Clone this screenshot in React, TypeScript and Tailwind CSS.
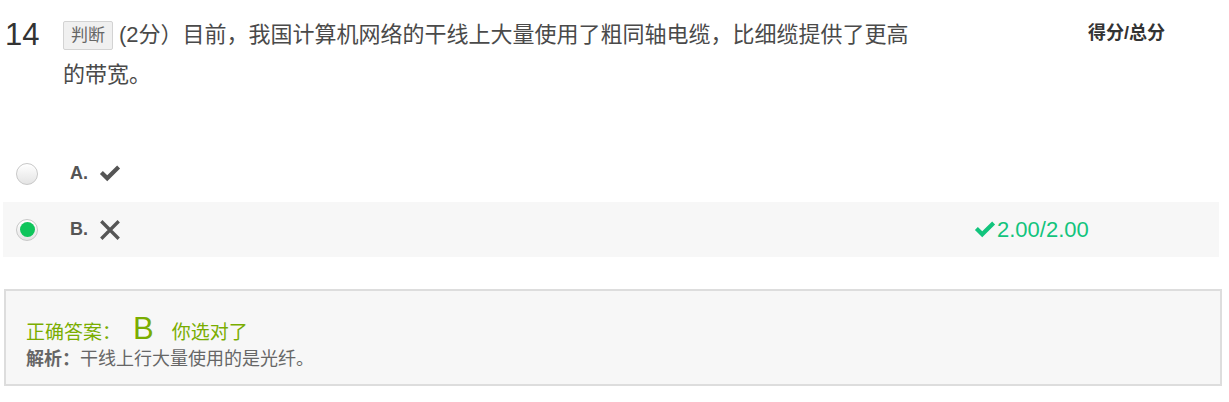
const font = '[font-family:"Liberation_Sans","Noto_Sans_CJK_SC",sans-serif]'

function Check({ className }: { className?: string }) {
  return (
    <svg viewBox="0 0 24 18" className={className} fill="currentColor">
      <path d="M1 9.5 L4.2 6.3 L9 11 L19.8 0.3 L23 3.5 L9 17.5 Z" />
    </svg>
  )
}

function Cross({ className }: { className?: string }) {
  return (
    <svg viewBox="0 0 24 24" className={className} stroke="currentColor" strokeWidth="3.6" fill="none">
      <path d="M2.5 2.5 L21.5 21.5 M21.5 2.5 L2.5 21.5" />
    </svg>
  )
}

function Radio({ checked }: { checked?: boolean }) {
  return (
    <div className="w-[22px] h-[22px] rounded-full border border-[#c8c8c8] bg-gradient-to-b from-white to-[#e4e4e4] flex items-center justify-center shadow-[inset_0_1px_1px_rgba(255,255,255,0.8)]">
      {checked && <div className="w-[15px] h-[15px] rounded-full bg-[#0fc55b]" />}
    </div>
  )
}

export default function App() {
  return (
    <div className={`w-[1229px] h-[402px] bg-white text-[#3d3d3d] ${font}`}>
      {/* question */}
      <div className="flex pt-[15px]">
        <div className="w-[63px] pl-[5px] text-[31px] leading-[40px] text-[#333]">14</div>
        <div className="w-[856px] text-[22px] leading-[40px] text-[#4a4a4a]">
          <span className="inline-block align-[1px] h-[29px] leading-[27px] px-[7px] mr-[6px] border border-[#d3d3d3] bg-[#f0f0f0] rounded-[2px] text-[17px] text-[#666]">
            判断
          </span>
          (2分）目前，我国计算机网络的干线上大量使用了粗同轴电缆，比细缆提供了更高的带宽。
        </div>
        <div className="flex-1 pl-[169px] pt-[3px] text-[18px] font-bold text-[#333] leading-[30px]">得分/总分</div>
      </div>

      {/* options */}
      <div className="mt-[51px] px-[3px] w-[1222px]">
        <div className="h-[55px] flex items-center pl-[13px]">
          <Radio />
          <span className="ml-[32px] font-bold text-[18px] text-[#555]">A.</span>
          <Check className="ml-[11px] w-[22px] h-[17px] text-[#555]" />
        </div>
        <div className="h-[55px] mt-[1px] flex items-center pl-[13px] bg-[#f7f7f7]">
          <Radio checked />
          <span className="ml-[32px] font-bold text-[18px] text-[#555]">B.</span>
          <Cross className="ml-[11px] w-[22px] h-[22px] text-[#555]" />
          <div className="ml-[853px] flex items-center text-[#12c47d] text-[22px]">
            <Check className="w-[22px] h-[17px] mr-[1px]" />
            2.00/2.00
          </div>
        </div>
      </div>

      {/* answer */}
      <div className="mt-[32px] ml-[4px] w-[1218px] h-[97px] border-2 border-[#dddddd] bg-[#f7f7f7] pl-[20px] pt-[20px]">
        <div className="flex items-baseline text-[#7aad00]">
          <span className="text-[19px]">正确答案：</span>
          <span className="text-[31px] leading-[36px] ml-[12px]">B</span>
          <span className="text-[19px] ml-[18px]">你选对了</span>
        </div>
        <div className="text-[18px] text-[#666] leading-[22px]">
          <span className="font-bold">解析：</span>干线上行大量使用的是光纤。
        </div>
      </div>
    </div>
  )
}
